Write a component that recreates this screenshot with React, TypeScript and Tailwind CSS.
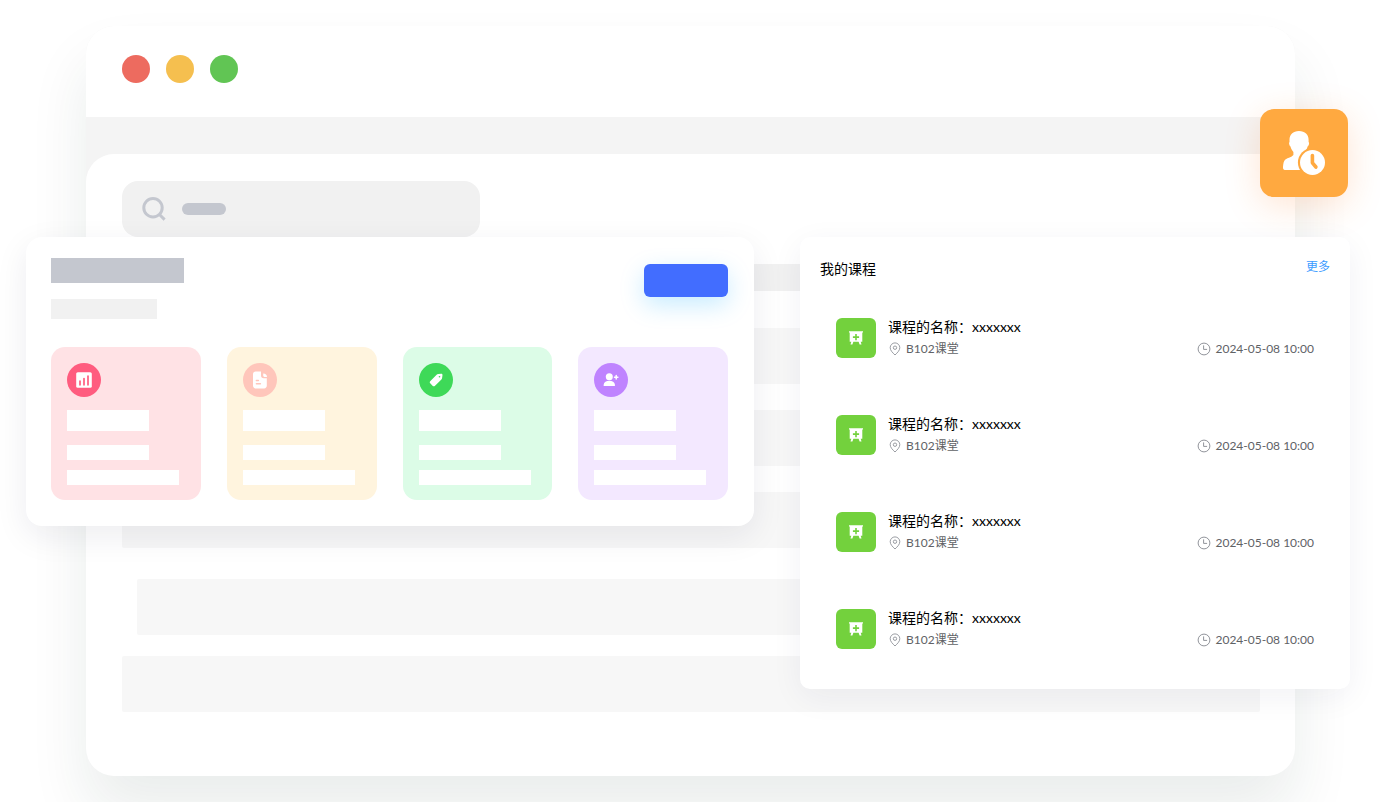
import React from 'react';

const courses = [
  { id: 1, name: '课程的名称：xxxxxxx', room: 'B102课堂', time: '2024-05-08 10:00' },
  { id: 2, name: '课程的名称：xxxxxxx', room: 'B102课堂', time: '2024-05-08 10:00' },
  { id: 3, name: '课程的名称：xxxxxxx', room: 'B102课堂', time: '2024-05-08 10:00' },
  { id: 4, name: '课程的名称：xxxxxxx', room: 'B102课堂', time: '2024-05-08 10:00' },
];

const SearchIcon = () => (
  <svg viewBox="0 0 24 24" className="size-6 shrink-0" fill="none" stroke="#c4c7cf" strokeWidth="3">
    <circle cx="11" cy="10.8" r="9.2" />
    <path d="M17.2 17.2 L22.6 22.6" />
  </svg>
);

const ChartIcon = () => (
  <svg viewBox="0 0 18 18" className="size-[18px]">
    <rect x="1.2" y="1.2" width="15.6" height="15.6" rx="1.6" fill="#fff" />
    <path d="M5 10v3.800M9 7.600v6.200M13 5v8.800" stroke="#ff5c7f" strokeWidth="1.700" strokeLinecap="round" />
  </svg>
);

const FileIcon = () => (
  <svg viewBox="0 0 18 18" className="size-[18px]">
    <path d="M4.6.6H10v3.8c0 1.7 1 2.8 2.8 2.8h3v7.6c0 1.5-1.1 2.6-2.6 2.6H4.6C3.1 17.4 2 16.3 2 14.8V3.2C2 1.7 3.1.6 4.6.6Z" fill="#fff" />
    <path d="M12.2 2.4c2.4 0 3.8 1.4 3.8 3.6h-2.4c-.9 0-1.4-.5-1.4-1.4Z" fill="#fff" />
    <path d="M5.4 9.4h2M5.4 12.8h4" stroke="#ffc6bb" strokeWidth="1.5" strokeLinecap="round" />
  </svg>
);

const TagIcon = () => (
  <svg viewBox="0 0 18 18" className="size-[18px]">
    <path d="M9.6 3.8c.4-.4 1-.7 1.6-.8l3-.2c.8 0 1.3.5 1.3 1.3l-.4 3c-.1.6-.3 1.1-.7 1.5l-6.6 6.3c-.6.6-1.4.6-2 0l-2.6-2.6c-.6-.6-.6-1.4 0-2Z" fill="#fff" />
    <circle cx="12.5" cy="5.8" r="0.8" fill="#3ed958" />
  </svg>
);

const UserPlusIcon = () => (
  <svg viewBox="0 0 18 18" className="size-[18px]" fill="#fff">
    <circle cx="7.3" cy="5.7" r="3.5" />
    <path d="M1.600 13.900c.3-2.700 2.700-4.100 5.700-4.100s5.400 1.400 5.700 4.100c.1.700-.2 1.100-.8 1.100H2.400c-.6 0-.9-.4-.8-1.100Z" />
    <path d="M14.200 4.600v3.400M12.500 6.300h3.400" stroke="#fff" strokeWidth="1.500" strokeLinecap="round" />
  </svg>
);

const UserClockIcon = () => (
  <svg viewBox="0 0 44 44" className="size-11">
    <path
      d="M17 0C23 0 26.6 3.6 26.6 9v2c.6.5.6 1.6.3 2.6-.3 1-.8 1.6-1.3 2-.7 2.400-1.700 4.200-3.200 5.600v3L25 27v12H2.600C1.300 38.600.900 37.600 1 36c.2-3.400.7-6.200 2.400-7.600 2.600-1.900 6.100-2 8-4.400v-3c-1.300-1.300-2.300-3.100-2.900-5.400-.6-.4-1-1.100-1.200-2-.3-1-.3-2 .2-2.600V9C7.500 3.600 11 0 17 0Z"
      fill="#fff"
    />
    <circle cx="30.5" cy="31.5" r="14.600" fill="#ffa940" />
    <circle cx="30.5" cy="31.5" r="12.5" fill="#fff" />
    <path d="M30.400 24.600v7.200l3.500 4.200" fill="none" stroke="#ffa940" strokeWidth="3.600" strokeLinecap="round" strokeLinejoin="round" />
  </svg>
);

const BoardIcon = () => (
  <svg viewBox="0 0 16 16" className="size-4">
    <path d="M1 1.200h14v1.400h-.7v9.200h-1.600l.8 2.600h-1.900l-1-2.600H5.400l-1 2.600H2.500l.8-2.600H1.700V2.600H1Z" fill="#fff" />
    <path d="M8 4v6.200M4.900 7.100h6.200" stroke="#73d13d" strokeWidth="1.600" />
  </svg>
);

const PinIcon = () => (
  <svg viewBox="0 0 14 14" className="size-3.5" fill="none" stroke="#8f9298" strokeWidth="0.9">
    <path d="M7 13C4.6 10.7 2.2 8.4 2.2 5.7a4.8 4.8 0 0 1 9.6 0C11.8 8.4 9.4 10.7 7 13Z" />
    <circle cx="7" cy="5.7" r="1.7" />
  </svg>
);

const ClockIcon = () => (
  <svg viewBox="0 0 14 14" className="size-3.5" fill="none" stroke="#85888e" strokeWidth="0.9">
    <circle cx="7" cy="7" r="5.9" />
    <path d="M6.600 3.400v4h3.500" />
  </svg>
);

const StatCard = ({ icon: Icon, card, dot }: { icon: any, card: string, dot: string }) => (
  <div className={`flex flex-col rounded-[14px] px-4 pt-4 pb-[15px] ${card}`}>
    <div className={`flex size-[34px] items-center justify-center rounded-full ${dot}`}>
      <Icon />
    </div>
    <div className="mt-[13px] h-[21px] w-[82px] bg-white" />
    <div className="mt-3.5 h-[15px] w-[82px] bg-white" />
    <div className="mt-2.5 h-[15px] w-28 max-w-full bg-white" />
  </div>
);

const CourseItem = ({ name, room, time }: { name: string, room: string, time: string }) => (
  <li className="flex items-center gap-3">
    <div className="flex size-10 shrink-0 items-center justify-center rounded-md bg-[#73d13d]">
      <BoardIcon />
    </div>
    <div className="flex-1">
      <h3 className="text-sm leading-[22px] text-black">{name}</h3>
      <div className="flex justify-between text-xs leading-[22px] text-[#606266]">
        <span className="flex items-center gap-1">
          <PinIcon />
          {room}
        </span>
        <time className="flex items-center gap-1">
          <ClockIcon />
          {time}
        </time>
      </div>
    </div>
  </li>
);

export default function App() {
  return (
    <div className="relative min-h-screen overflow-hidden bg-white pt-[26px] pb-[26px] font-['Lato','Noto_Sans_CJK_SC',sans-serif]">
      {/* Browser window */}
      <div className="mr-[85px] ml-[86px] overflow-hidden rounded-[28px] bg-[#f4f4f4] shadow-[0_36px_60px_rgba(20,50,40,0.09)]">
        <div className="flex gap-4 bg-white px-9 pt-[29px] pb-[34px]">
          <span className="size-7 rounded-full bg-[#ed6b5f]" />
          <span className="size-7 rounded-full bg-[#f5bf4f]" />
          <span className="size-7 rounded-full bg-[#61c554]" />
        </div>
        <main className="mt-[37px] rounded-t-[28px] bg-white pt-[27px] pr-[35px] pb-16 pl-9">
          <label className="flex h-14 w-[358px] items-center gap-4 rounded-2xl bg-[#f1f1f1] px-5">
            <SearchIcon />
            <span className="h-3 w-11 rounded-full bg-[#c4c7cf]" />
            <input type="search" aria-label="搜索" className="min-w-0 flex-1 bg-transparent outline-none" />
          </label>
          <div className="mt-[27px] h-[27px] rounded-xs bg-[#f1f1f1]" />
          <div className="mt-[37px] h-14 rounded-xs bg-[#f7f7f7]" />
          <div className="mt-[26px] h-14 rounded-xs bg-[#f7f7f7]" />
          <div className="mt-[26px] h-14 rounded-xs bg-[#f7f7f7]" />
          <div className="mt-[31px] ml-[15px] h-14 rounded-xs bg-[#f7f7f7]" />
          <div className="mt-[21px] h-14 rounded-xs bg-[#f7f7f7]" />
        </main>
      </div>

      {/* Floating panels */}
      <div className="absolute top-[237px] right-[30px] left-[26px] grid grid-cols-[728fr_550fr] items-start gap-[46px]">
        <section className="rounded-2xl bg-white pt-[21px] pr-[26px] pb-[26px] pl-[25px] shadow-[0_10px_33px_rgba(20,30,70,0.08)]">
          <div className="flex items-start justify-between">
            <div>
              <div className="h-[25px] w-[133px] bg-[#c4c7cf]" />
              <div className="mt-4 h-5 w-[106px] bg-[#f1f1f1]" />
            </div>
            <button aria-label="新建" className="mt-1.5 h-[33px] w-[84px] rounded-md bg-[#426dff] shadow-[0_8px_24px_rgba(0,170,255,0.22)]" />
          </div>
          <div className="mt-7 grid grid-cols-4 gap-[26px]">
            <StatCard icon={ChartIcon} card="bg-[#ffe2e5]" dot="bg-[#ff5c7f]" />
            <StatCard icon={FileIcon} card="bg-[#fff4de]" dot="bg-[#ffc6bb]" />
            <StatCard icon={TagIcon} card="bg-[#dcfce7]" dot="bg-[#3ed958]" />
            <StatCard icon={UserPlusIcon} card="bg-[#f3e8ff]" dot="bg-[#bf83ff]" />
          </div>
        </section>

        <section className="rounded-[10px] bg-white px-5 pt-5 pb-[38px] shadow-[0_8px_32px_rgba(30,30,80,0.06)]">
          <div className="flex items-start justify-between">
            <h2 className="text-sm leading-6 text-black">我的课程</h2>
            <a href="#" className="text-xs leading-5 text-[#3b9cff]">更多</a>
          </div>
          <ul className="mt-[35px] flex flex-col gap-[53px] px-4">
            {courses.map((course) => (
              <CourseItem key={course.id} name={course.name} room={course.room} time={course.time} />
            ))}
          </ul>
        </section>
      </div>

      <div className="absolute top-[109px] right-8 flex size-[88px] items-center justify-center rounded-[14px] bg-[#ffa940] shadow-[0_8px_36px_rgba(255,120,30,0.2)]">
        <UserClockIcon />
      </div>
    </div>
  );
}
